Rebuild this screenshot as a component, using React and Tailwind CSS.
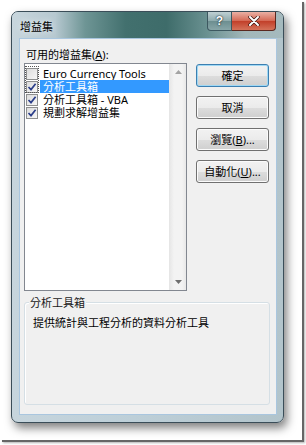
const items = [
  { label: "Euro Currency Tools", checked: false },
  { label: "分析工具箱", checked: true, selected: true },
  { label: "分析工具箱 - VBA", checked: true },
  { label: "規劃求解增益集", checked: true },
];

const buttons = [
  { key: "ok", text: <>確定</>, isDefault: true },
  { key: "cancel", text: <>取消</> },
  { key: "browse", text: <>瀏覽(<u>B</u>)...</> },
  { key: "auto", text: <>自動化(<u>U</u>)...</> },
];

const CheckBox = ({ checked }) => (
  <div className="w-[12px] h-[12px] border border-[#8e8f8f] bg-[linear-gradient(135deg,#dcdcdc,#f7f7f7)] flex items-center justify-center shrink-0">
    {checked && (
      <svg width="10" height="10" viewBox="0 0 10 10">
        <path d="M1.5 5 L4 7.6 L8.6 1.8" fill="none" stroke="#2c3f8a" strokeWidth="1.7" />
      </svg>
    )}
  </div>
);

const App = () => {
  return (
    <div className="w-[306px] h-[445px] bg-white font-['Noto_Sans','Noto_Sans_CJK_TC',sans-serif] text-[11px] text-black">
      {/* screenshot with its drop shadow edge */}
      <div className="w-[302px] h-[440px] bg-white shadow-[2px_2px_0_#666,3px_3px_2px_rgba(0,0,0,0.3)] pl-[11px] pt-[11px]">
        {/* Window */}
        <div className="w-[273px] h-[412px] rounded-[7px] border border-[#3a4d58] flex flex-col overflow-hidden shadow-[3px_5px_10px_rgba(0,0,0,0.5)] bg-[linear-gradient(to_right,#c6d5dd,#bdcfd8_45%,#b2c4cb)]">
          {/* Title bar */}
          <div className="h-[26px] flex items-start shrink-0 bg-[linear-gradient(to_right,#c8d6dd_0%,#b6c8d0_16%,#6e9595_27%,#42706e_42%,#3e6c6a_57%,#6a9191_72%,#a2b7ba_86%,#a5babe_100%)]">
            <span className="ml-[8px] mt-[8px] leading-[13px] [text-shadow:0_0_6px_rgba(255,255,255,0.9)]">增益集</span>
            <div className="ml-auto mr-[7px] flex">
              <div className="w-[25px] h-[19px] border border-t-0 border-[#3d5860] rounded-bl-[4px] bg-[linear-gradient(#bfd0d3,#8eaaac_50%,#6c8e90_51%,#88a6a8)] flex items-center justify-center text-white font-bold text-[12px] font-['Liberation_Sans',sans-serif] [text-shadow:0_0_2px_#1b2c30,0_0_1px_#1b2c30]">
                ?
              </div>
              <div className="w-[44px] h-[19px] border border-t-0 border-l-0 border-[#5a2820] rounded-br-[4px] bg-[linear-gradient(#eab0a4,#d56a56_48%,#c2402a_52%,#d4725a)] flex items-center justify-center">
                <svg width="12" height="10" viewBox="0 0 12 10">
                  <path d="M2 1 L10 9 M10 1 L2 9" stroke="#3a1510" strokeWidth="3.4" strokeLinecap="round" />
                  <path d="M2 1 L10 9 M10 1 L2 9" stroke="#fff" strokeWidth="2" strokeLinecap="round" />
                </svg>
              </div>
            </div>
          </div>

          {/* Client area */}
          <div className="ml-[7px] mr-[6px] mb-[7px] flex-1 border border-[#a9c6df] bg-[#f0f0f0] px-[4px] pt-[7px] flex flex-col">
            <div className="flex">
              <div className="w-[163px]">
                <div className="h-[17px] leading-[17px] pl-[2px]">
                  可用的增益集(<u>A</u>):
                </div>
                {/* List */}
                <div className="h-[228px] border border-[#828790] bg-white flex">
                  <div className="flex-1 pt-[3px] relative">
                    {items.map((item) => (
                      <div key={item.label} className="h-[13px] flex items-center pl-[1px]">
                        <CheckBox checked={item.checked} />
                        <span
                          className={`ml-[2px] pl-[3px] flex-1 leading-[13px] whitespace-nowrap ${
                            item.selected ? "bg-[#3399ff] text-white" : ""
                          }`}
                        >
                          {item.label}
                        </span>
                      </div>
                    ))}
                    {/* focus rectangle */}
                    <div className="absolute left-0 top-[2px] w-[14px] h-[27px] border border-dotted border-[#555]" />
                  </div>
                  {/* Scrollbar */}
                  <div className="w-[17px] border-l border-[#e6e6e6] bg-[linear-gradient(to_right,#e8e8e8,#f3f3f3_25%,#f3f3f3_75%,#e8e8e8)] flex flex-col items-center justify-between py-[6px]">
                    <svg width="7" height="4" viewBox="0 0 7 4">
                      <path d="M0 4 L3.5 0 L7 4 Z" fill="#a3a3a3" />
                    </svg>
                    <svg width="7" height="4" viewBox="0 0 7 4">
                      <path d="M0 0 L3.5 4 L7 0 Z" fill="#6e6e6e" />
                    </svg>
                  </div>
                </div>
              </div>

              {/* Buttons */}
              <div className="ml-[9px] pt-[18px] flex flex-col gap-[9px]">
                {buttons.map((b) => (
                  <div
                    key={b.key}
                    className={`w-[73px] h-[23px] rounded-[3px] border flex items-center justify-center leading-none bg-[linear-gradient(#f2f2f2,#ebebeb_50%,#dddddd_51%,#cfcfcf)] ${
                      b.isDefault
                        ? "border-[#3c7fb1] shadow-[inset_0_0_0_1px_#9fd8f4]"
                        : "border-[#707070] shadow-[inset_0_0_0_1px_#fbfbfb]"
                    }`}
                  >
                    {b.text}
                  </div>
                ))}
              </div>
            </div>

            {/* Group box */}
            <div className="mt-[11px] w-[246px] h-[103px] border border-[#d5dfe5] rounded-[3px] relative pl-[8px] pt-[13px] shadow-[inset_1px_1px_0_#fff]">
              <span className="absolute -top-[7px] left-[4px] px-[1px] bg-[#f0f0f0] leading-[13px] text-[#1a1a1a]">
                分析工具箱
              </span>
              <div className="leading-[13px]">提供統計與工程分析的資料分析工具</div>
            </div>
          </div>
        </div>
      </div>
    </div>
  );
};

export default App;
